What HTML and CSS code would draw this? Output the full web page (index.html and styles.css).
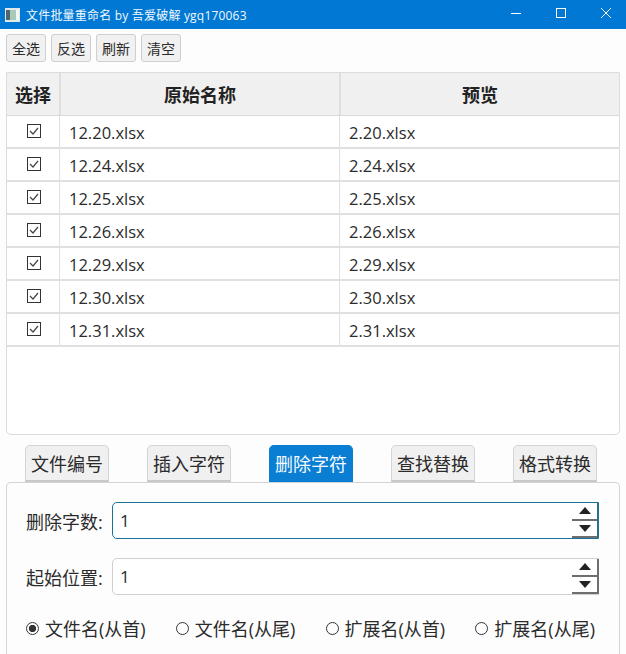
FILE: index.html
```html
<!DOCTYPE html>
<html lang="zh-CN">
<head>
<meta charset="utf-8">
<title>文件批量重命名</title>
<link rel="stylesheet" href="styles.css">
</head>
<body>
<div class="window">
  <header class="titlebar">
    <svg class="app-icon" width="16" height="16" viewBox="0 0 16 16"><rect x="0" y="1" width="15" height="14" fill="#dfe8ea"/><rect x="1" y="3" width="4" height="10" fill="#4d6670"/><rect x="5" y="3" width="6" height="10" fill="#a9c8b8"/><rect x="11" y="3" width="3" height="10" fill="#f4f6f6"/></svg>
    <span class="title">文件批量重命名 by 吾爱破解 ygq170063</span>
    <div class="win-controls">
      <svg class="win-btn" width="45" height="29" viewBox="0 0 45 29"><path d="M18 13.500h10" stroke="#fff" fill="none"/></svg>
      <svg class="win-btn" width="45" height="29" viewBox="0 0 45 29"><rect x="18.500" y="8.500" width="9" height="9" stroke="#fff" fill="none"/></svg>
      <svg class="win-btn" width="45" height="29" viewBox="0 0 45 29"><path d="M18 8l10 10M28 8L18 18" stroke="#fff" fill="none"/></svg>
    </div>
  </header>

  <div class="toolbar">
    <button class="tool">全选</button>
    <button class="tool">反选</button>
    <button class="tool">刷新</button>
    <button class="tool">清空</button>
  </div>

  <section class="table">
    <div class="thead">
      <div class="th">选择</div>
      <div class="th">原始名称</div>
      <div class="th">预览</div>
    </div>
    <div class="row"><div class="cell check"><svg class="cb" width="14" height="14" viewBox="0 0 14 14"><rect x=".5" y=".5" width="13" height="13" fill="#fff" stroke="#333"/><path d="M3 7l3 3 5-6" fill="none" stroke="#444" stroke-width="1.200"/></svg></div><div class="cell">12.20.xlsx</div><div class="cell">2.20.xlsx</div></div>
    <div class="row"><div class="cell check"><svg class="cb" width="14" height="14" viewBox="0 0 14 14"><rect x=".5" y=".5" width="13" height="13" fill="#fff" stroke="#333"/><path d="M3 7l3 3 5-6" fill="none" stroke="#444" stroke-width="1.200"/></svg></div><div class="cell">12.24.xlsx</div><div class="cell">2.24.xlsx</div></div>
    <div class="row"><div class="cell check"><svg class="cb" width="14" height="14" viewBox="0 0 14 14"><rect x=".5" y=".5" width="13" height="13" fill="#fff" stroke="#333"/><path d="M3 7l3 3 5-6" fill="none" stroke="#444" stroke-width="1.200"/></svg></div><div class="cell">12.25.xlsx</div><div class="cell">2.25.xlsx</div></div>
    <div class="row"><div class="cell check"><svg class="cb" width="14" height="14" viewBox="0 0 14 14"><rect x=".5" y=".5" width="13" height="13" fill="#fff" stroke="#333"/><path d="M3 7l3 3 5-6" fill="none" stroke="#444" stroke-width="1.200"/></svg></div><div class="cell">12.26.xlsx</div><div class="cell">2.26.xlsx</div></div>
    <div class="row"><div class="cell check"><svg class="cb" width="14" height="14" viewBox="0 0 14 14"><rect x=".5" y=".5" width="13" height="13" fill="#fff" stroke="#333"/><path d="M3 7l3 3 5-6" fill="none" stroke="#444" stroke-width="1.200"/></svg></div><div class="cell">12.29.xlsx</div><div class="cell">2.29.xlsx</div></div>
    <div class="row"><div class="cell check"><svg class="cb" width="14" height="14" viewBox="0 0 14 14"><rect x=".5" y=".5" width="13" height="13" fill="#fff" stroke="#333"/><path d="M3 7l3 3 5-6" fill="none" stroke="#444" stroke-width="1.200"/></svg></div><div class="cell">12.30.xlsx</div><div class="cell">2.30.xlsx</div></div>
    <div class="row"><div class="cell check"><svg class="cb" width="14" height="14" viewBox="0 0 14 14"><rect x=".5" y=".5" width="13" height="13" fill="#fff" stroke="#333"/><path d="M3 7l3 3 5-6" fill="none" stroke="#444" stroke-width="1.200"/></svg></div><div class="cell">12.31.xlsx</div><div class="cell">2.31.xlsx</div></div>
  </section>

  <nav class="tabs">
    <button class="tab">文件编号</button>
    <button class="tab">插入字符</button>
    <button class="tab active">删除字符</button>
    <button class="tab">查找替换</button>
    <button class="tab">格式转换</button>
  </nav>

  <section class="panel">
    <div class="field">
      <label class="label">删除字数:</label>
      <div class="spin focused">
        <span class="value">1</span>
        <div class="arrows">
          <span class="arrow"><svg width="12" height="7" viewBox="0 0 12 7"><path d="M6 0l6 7H0z" fill="#222"/></svg></span>
          <span class="arrow"><svg width="12" height="7" viewBox="0 0 12 7"><path d="M0 0h12L6 7z" fill="#222"/></svg></span>
        </div>
      </div>
    </div>
    <div class="field">
      <label class="label">起始位置:</label>
      <div class="spin">
        <span class="value">1</span>
        <div class="arrows">
          <span class="arrow"><svg width="12" height="7" viewBox="0 0 12 7"><path d="M6 0l6 7H0z" fill="#222"/></svg></span>
          <span class="arrow"><svg width="12" height="7" viewBox="0 0 12 7"><path d="M0 0h12L6 7z" fill="#222"/></svg></span>
        </div>
      </div>
    </div>
    <div class="radios">
      <span class="radio on"><i class="dot"></i>文件名(从首)</span>
      <span class="radio"><i class="dot"></i>文件名(从尾)</span>
      <span class="radio"><i class="dot"></i>扩展名(从首)</span>
      <span class="radio"><i class="dot"></i>扩展名(从尾)</span>
    </div>
  </section>
</div>
</body>
</html>
```
FILE: styles.css
```css
* { box-sizing: border-box; }
html, body { margin: 0; height: 100%; overflow: hidden; }
body {
  font-family: "Open Sans", "Noto Sans CJK SC", sans-serif;
  color: #2b2b2b;
  background: #fdfdfd;
}
.window { width: 626px; height: 654px; display: flex; flex-direction: column; overflow: hidden; }

.titlebar { height: 29px; flex: none; background: #0078d4; color: #f2f8fd; display: flex; align-items: center; padding-left: 5px; font-size: 12px; }
.app-icon { flex: none; margin-right: 5px; }
.title { flex: 1; white-space: nowrap; letter-spacing: .2px; }
.win-controls { display: flex; flex: none; margin-right: -2px; }
.win-btn { display: block; }

.toolbar { display: flex; gap: 5px; padding: 5px 6px 0; height: 43px; flex: none; }
.tool { width: 40px; height: 28px; padding: 0; font: 14px "Open Sans", "Noto Sans CJK SC", sans-serif; color: #2b2b2b; background: #f1f1f1; border: 1px solid #cfcfcf; border-radius: 3px; }

.table { margin: 0 6px; height: 363px; flex: none; background: #fff; border: 1px solid #dcdcdc; border-radius: 0 0 5px 5px; overflow: hidden; }
.thead { display: grid; grid-template-columns: 54px 280px 1fr; height: 43px; background: #f0f0f0; border-bottom: 1px solid #d8d8d8; }
.th { display: flex; align-items: center; justify-content: center; font-size: 18px; font-weight: 700; color: #222; border-right: 2px solid #dedede; }
.th:last-child { border-right: 0; }
.row { display: grid; grid-template-columns: 53px 280px 1fr; height: 33px; border-bottom: 2px solid #e0e0e0; }
.cell { display: flex; align-items: center; padding: 1px 0 0 9px; font-size: 16.500px; border-right: 1px solid #e0e0e0; }
.cell:last-child { border-right: 0; }
.check { justify-content: center; padding: 0 0 2px 2px; }

.tabs { display: flex; justify-content: space-between; padding: 10px 29px 0 25px; flex: none; }
.tab { width: 84px; height: 37px; padding: 0; font: 18px "Open Sans", "Noto Sans CJK SC", sans-serif; color: #2b2b2b; background: #f0f0f0; border: 1px solid #d4d4d4; border-bottom: 2px solid #c8c8c8; border-radius: 5px 5px 0 0; }
.tab.active { background: #0a7ed2; color: #f4faff; border-color: #0a7ed2; }

.panel { flex: 1; margin: 0 6px; padding: 19px 20px 0 19px; background: #fdfdfd; border: 1px solid #d4d4d4; border-bottom: 0; border-radius: 5px 5px 0 0; }
.field { display: flex; align-items: center; height: 37px; margin-bottom: 19px; }
.label { width: 86px; flex: none; font-size: 18px; white-space: nowrap; }
.spin { flex: 1; height: 37px; display: flex; align-items: center; justify-content: space-between; background: #fff; border: 1px solid #cfcfcf; border-radius: 5px 0 0 5px; padding-left: 7px; }
.spin.focused { border-color: #1a7299; }
.value { font-size: 17px; }
.arrows { width: 27px; height: 35px; display: flex; flex-direction: column; border-right: 2px solid #6e6e6e; margin-right: -1px; }
.spin.focused .arrows { border-right-color: #2a6d8f; }
.arrow { flex: 1; display: flex; align-items: center; justify-content: center; border-bottom: 2px solid #6e6e6e; background: #fff; }

.radios { display: flex; justify-content: space-between; padding-top: 1px; padding-right: 4px; }
.radio { display: flex; align-items: center; font-size: 18px; white-space: nowrap; }
.dot { width: 13px; height: 13px; border: 1px solid #333; border-radius: 50%; margin-right: 6px; background: #fff; flex: none; }
.radio.on .dot { background: radial-gradient(circle, #333 0 3.300px, #fff 4px); }
```
